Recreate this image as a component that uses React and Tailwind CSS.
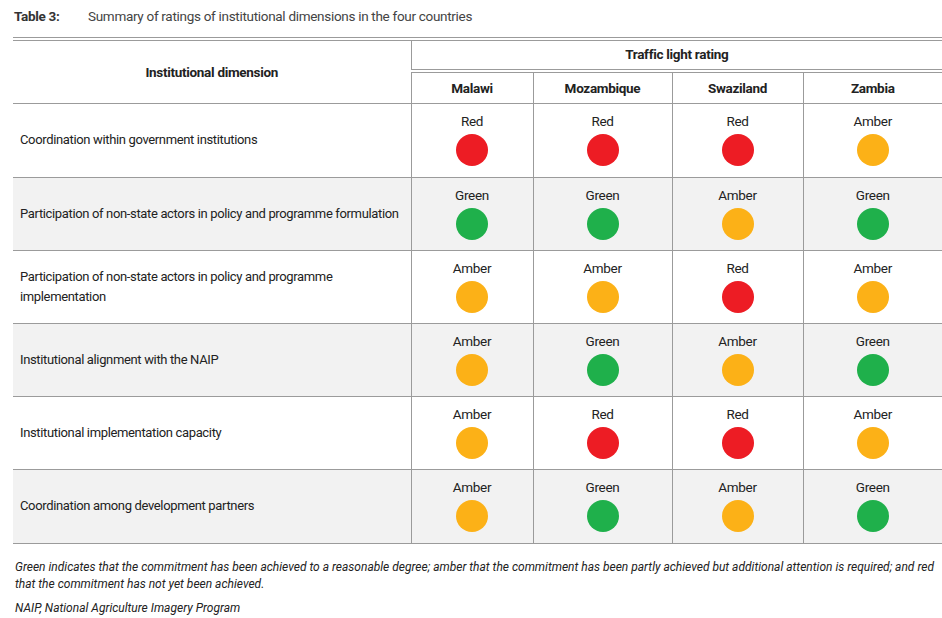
const countries = ['Malawi', 'Mozambique', 'Swaziland', 'Zambia'];

const rows = [
    { label: 'Coordination within government institutions', ratings: ['Red', 'Red', 'Red', 'Amber'] },
    { label: 'Participation of non-state actors in policy and programme formulation', ratings: ['Green', 'Green', 'Amber', 'Green'] },
    { label: 'Participation of non-state actors in policy and programme implementation', ratings: ['Amber', 'Amber', 'Red', 'Amber'], wrap: true },
    { label: 'Institutional alignment with the NAIP', ratings: ['Amber', 'Green', 'Amber', 'Green'] },
    { label: 'Institutional implementation capacity', ratings: ['Amber', 'Red', 'Red', 'Amber'] },
    { label: 'Coordination among development partners', ratings: ['Amber', 'Green', 'Amber', 'Green'] },
];

const dotColor = {
    Red: 'bg-[#ed1c24]',
    Amber: 'bg-[#fcb117]',
    Green: 'bg-[#1fb04b]',
};

function Rating({ value }) {
    return (
        <div className="flex flex-col items-center pt-[9px]">
            <span className="text-[13.5px] leading-[16px] tracking-[-0.3px] text-[#222]">{value}</span>
            <span className={`mt-[5px] w-[32px] h-[32px] rounded-full ${dotColor[value]}`} />
        </div>
    )
}

export default function App() {
    return (
        <div
            className="w-[942px] h-[618px] bg-white overflow-hidden text-[#222]"
            style={{ fontFamily: 'Roboto, "Liberation Sans", sans-serif' }}
        >
            <div className="h-[37px] flex items-center pl-[14px] pb-[5px] text-[13.5px] tracking-[-0.3px]">
                <span className="font-bold text-[#333] w-[74px]">Table 3:</span>
                <span className="text-[#444]">Summary of ratings of institutional dimensions in the four countries</span>
            </div>

            <div className="ml-[13px] border-t-4 border-double border-[#9b9b9b]">
                <table className="w-[929px] border-collapse table-fixed">
                    <colgroup>
                        <col className="w-[398px]" />
                        <col className="w-[122px]" />
                        <col className="w-[139px]" />
                        <col className="w-[131px]" />
                        <col className="w-[139px]" />
                    </colgroup>
                    <thead className="text-[13.5px] tracking-[-0.3px]">
                        <tr className="h-[30px]">
                            <th rowSpan={2} className="border-r border-b border-[#9b9b9b] font-bold pt-[1px]">
                                Institutional dimension
                            </th>
                            <th colSpan={4} className="border-b-4 border-double border-[#9b9b9b] font-bold pb-[1px]">
                                Traffic light rating
                            </th>
                        </tr>
                        <tr className="h-[32px]">
                            {countries.map((c, i) => (
                                <th
                                    key={c}
                                    className={`border-b border-[#9b9b9b] font-bold ${i < 3 ? 'border-r' : ''}`}
                                >
                                    {c}
                                </th>
                            ))}
                        </tr>
                    </thead>
                    <tbody>
                        {rows.map((row, index) => (
                            <tr
                                key={index}
                                className={`${index === 0 || index === 5 ? 'h-[74px]' : 'h-[73px]'} ${index % 2 === 1 ? 'bg-[#f2f2f2]' : 'bg-white'}`}
                            >
                                <td className="border-r border-b border-[#9b9b9b] pl-[7px] pr-[2px] text-[13px] tracking-[-0.35px] leading-[20px] align-middle whitespace-nowrap">
                                    {row.wrap ? (
                                        <>Participation of non-state actors in policy and programme<br />implementation</>
                                    ) : row.label}
                                </td>
                                {row.ratings.map((r, i) => (
                                    <td
                                        key={i}
                                        className={`border-b border-[#9b9b9b] align-top ${i < 3 ? 'border-r' : ''}`}
                                    >
                                        <Rating value={r} />
                                    </td>
                                ))}
                            </tr>
                        ))}
                    </tbody>
                </table>
            </div>

            <div className="pl-[15px] pt-[15px] italic text-[12px] leading-[17px] text-[#222] whitespace-nowrap">
                <p>
                    Green indicates that the commitment has been achieved to a reasonable degree; amber that the commitment has been partly achieved but additional attention is required; and red<br />
                    that the commitment has not yet been achieved.
                </p>
                <p className="mt-[7px]">NAIP, National Agriculture Imagery Program</p>
            </div>
        </div>
    )
}
